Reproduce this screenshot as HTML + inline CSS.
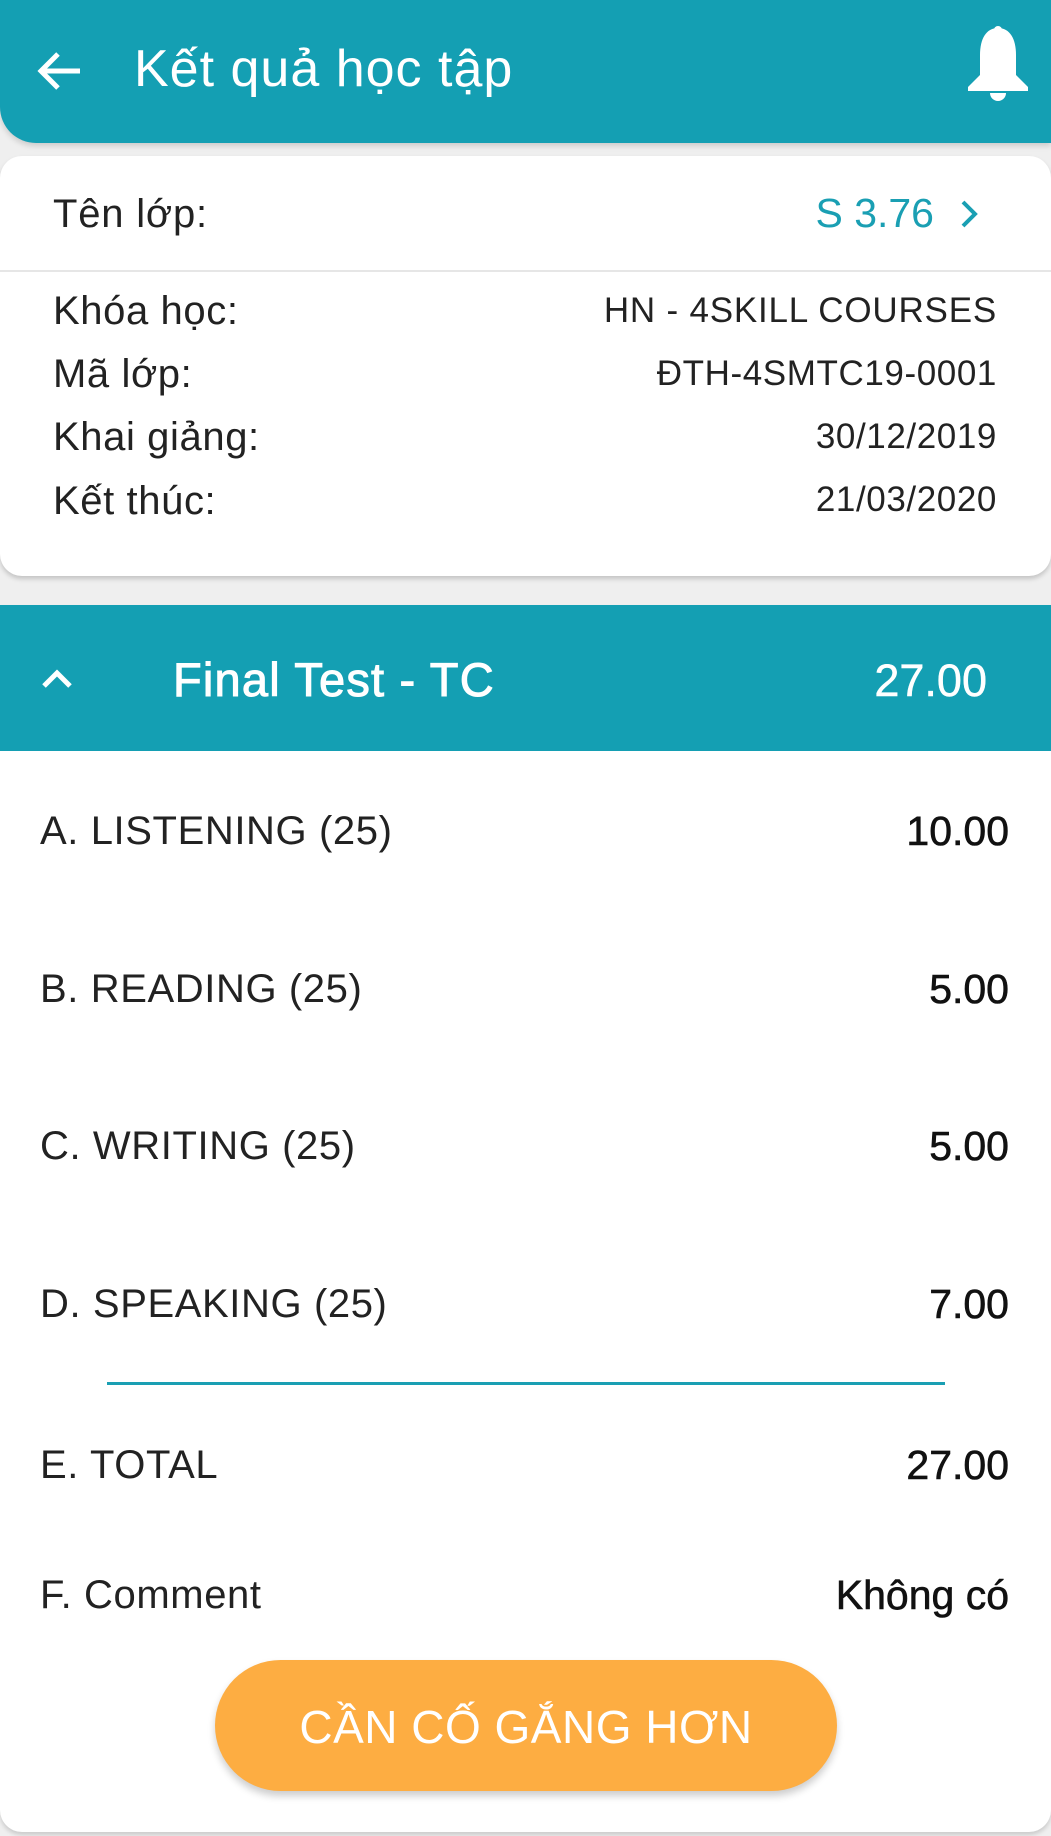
<!DOCTYPE html>
<html><head><meta charset="utf-8"><style>
*{margin:0;padding:0;box-sizing:border-box}
body{width:1051px;height:1836px;background:#efefef;font-family:"Liberation Sans",sans-serif;position:relative;overflow:hidden;color:#222}
.hdr{position:absolute;left:0;top:0;width:1051px;height:143px;background:#149fb3;border-bottom-left-radius:36px;box-shadow:0 3px 6px rgba(0,0,0,.15)}
.t{position:absolute;white-space:nowrap;line-height:1}
.card{position:absolute;left:0;top:156px;width:1051px;height:420px;background:#fff;border-radius:22px;box-shadow:0 3px 5px rgba(0,0,0,.18)}
.card2{position:absolute;left:0;top:605px;width:1051px;height:1227px;background:#fff;border-radius:0 0 22px 22px;box-shadow:0 3px 4px rgba(0,0,0,.15)}
.sec{position:absolute;left:0;top:605px;width:1051px;height:146px;background:#149fb3}
.r{text-align:right}
.v{color:#111;-webkit-text-stroke:0.6px #111}
.l{font-size:40px;letter-spacing:0.6px}
</style></head><body>
<div class="hdr"></div>
<svg style="position:absolute;left:36px;top:50px" width="48" height="42" viewBox="0 0 48 42"><path d="M44 21H6M22 4L5 21l17 17" fill="none" stroke="#fff" stroke-width="5"/></svg>
<div class="t" style="left:134px;top:43px;font-size:52px;color:#fff;letter-spacing:1px">Kết quả học tập</div>
<svg style="position:absolute;left:966px;top:25px" width="64" height="78" viewBox="0 0 64 78"><circle cx="32" cy="5" r="4" fill="#fff"/><path d="M32 3C20 3 14 14 14 30v20L2 62v4h60v-4L50 50V30C50 14 44 3 32 3z" fill="#fff"/><path d="M24 68a8 8 0 0016 0z" fill="#fff"/></svg>

<div class="card"></div>
<div class="t" style="left:53px;top:194px;font-size:40px;letter-spacing:0.8px">Tên lớp:</div>
<div class="t r" style="right:117px;top:193px;font-size:41px;color:#1a9fb3">S 3.76</div>
<svg style="position:absolute;left:958px;top:199px" width="22" height="30" viewBox="0 0 22 30"><path d="M5 3l12 12L5 27" fill="none" stroke="#1a9fb3" stroke-width="4"/></svg>
<div style="position:absolute;left:0;top:270px;width:1051px;height:2px;background:#e6e6e6"></div>
<div class="t" style="left:53px;top:291px;font-size:40px;letter-spacing:0.6px">Khóa học:</div>
<div class="t" style="left:53px;top:354px;font-size:40px;letter-spacing:0.6px">Mã lớp:</div>
<div class="t" style="left:53px;top:417px;font-size:40px;letter-spacing:0.6px">Khai giảng:</div>
<div class="t" style="left:53px;top:481px;font-size:40px;letter-spacing:0.6px">Kết thúc:</div>
<div class="t r" style="right:54px;top:293px;font-size:35px;letter-spacing:0.8px">HN - 4SKILL COURSES</div>
<div class="t r" style="right:54px;top:356px;font-size:35px;letter-spacing:0.6px">ĐTH-4SMTC19-0001</div>
<div class="t r" style="right:54px;top:419px;font-size:35px;letter-spacing:0.6px">30/12/2019</div>
<div class="t r" style="right:54px;top:482px;font-size:35px;letter-spacing:0.6px">21/03/2020</div>

<div class="card2"></div>
<div class="sec"></div>
<svg style="position:absolute;left:40px;top:666px" width="34" height="24" viewBox="0 0 34 24"><path d="M4 20L17 7l13 13" fill="none" stroke="#fff" stroke-width="5"/></svg>
<div class="t" style="left:173px;top:656px;font-size:47px;color:#fff;-webkit-text-stroke:1px #fff;letter-spacing:1.2px">Final Test - TC</div>
<div class="t r" style="right:64px;top:658px;font-size:45px;color:#fff;-webkit-text-stroke:0.5px #fff">27.00</div>

<div class="t l" style="left:40px;top:811px">A. LISTENING (25)</div>
<div class="t r v" style="right:42px;top:811px;font-size:41px">10.00</div>
<div class="t l" style="left:40px;top:969px">B. READING (25)</div>
<div class="t r v" style="right:42px;top:969px;font-size:41px">5.00</div>
<div class="t l" style="left:40px;top:1126px">C. WRITING (25)</div>
<div class="t r v" style="right:42px;top:1126px;font-size:41px">5.00</div>
<div class="t l" style="left:40px;top:1284px">D. SPEAKING (25)</div>
<div class="t r v" style="right:42px;top:1284px;font-size:41px">7.00</div>
<div style="position:absolute;left:107px;top:1382px;width:838px;height:3px;background:#1a9fb3"></div>
<div class="t l" style="left:40px;top:1445px">E. TOTAL</div>
<div class="t r v" style="right:42px;top:1445px;font-size:41px">27.00</div>
<div class="t l" style="left:40px;top:1575px">F. Comment</div>
<div class="t r v" style="right:42px;top:1575px;font-size:41px">Không có</div>

<div style="position:absolute;left:215px;top:1660px;width:622px;height:131px;border-radius:66px;background:#fdad42;box-shadow:0 5px 8px rgba(0,0,0,.2);color:#fff;font-size:46px;letter-spacing:0.5px;text-align:center;line-height:135px">CẦN CỐ GẮNG HƠN</div>
</body></html>
